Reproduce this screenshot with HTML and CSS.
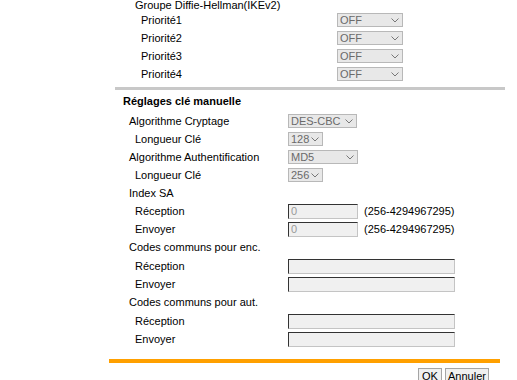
FILE: index.html
```html
<!DOCTYPE html>
<html lang="fr">
<head>
<meta charset="utf-8">
<title>Réglages IPsec</title>
<link rel="stylesheet" href="styles.css">
</head>
<body>
<div class="page">
  <section class="dh">
    <div class="dh-title">Groupe Diffie-Hellman(IKEv2)</div>
    <div class="row row-dh"><span class="lbl">Priorité1</span><span class="sel w66"><span>OFF</span><svg class="chev" width="8" height="5" viewBox="0 0 8 5"><polyline points="0.5,0.5 4,4 7.5,0.5"/></svg></span></div>
    <div class="row row-dh"><span class="lbl">Priorité2</span><span class="sel w66"><span>OFF</span><svg class="chev" width="8" height="5" viewBox="0 0 8 5"><polyline points="0.5,0.5 4,4 7.5,0.5"/></svg></span></div>
    <div class="row row-dh"><span class="lbl">Priorité3</span><span class="sel w66"><span>OFF</span><svg class="chev" width="8" height="5" viewBox="0 0 8 5"><polyline points="0.5,0.5 4,4 7.5,0.5"/></svg></span></div>
    <div class="row row-dh"><span class="lbl">Priorité4</span><span class="sel w66"><span>OFF</span><svg class="chev" width="8" height="5" viewBox="0 0 8 5"><polyline points="0.5,0.5 4,4 7.5,0.5"/></svg></span></div>
  </section>
  <div class="sep"></div>
  <section class="manual">
    <div class="heading">Réglages clé manuelle</div>
    <div class="row row-m"><span class="lbl l1">Algorithme Cryptage</span><span class="sel w69"><span>DES-CBC</span><svg class="chev" width="8" height="5" viewBox="0 0 8 5"><polyline points="0.5,0.5 4,4 7.5,0.5"/></svg></span></div>
    <div class="row row-m"><span class="lbl l2">Longueur Clé</span><span class="sel w35"><span>128</span><svg class="chev" width="8" height="5" viewBox="0 0 8 5"><polyline points="0.5,0.5 4,4 7.5,0.5"/></svg></span></div>
    <div class="row row-m"><span class="lbl l1">Algorithme Authentification</span><span class="sel w70"><span>MD5</span><svg class="chev" width="8" height="5" viewBox="0 0 8 5"><polyline points="0.5,0.5 4,4 7.5,0.5"/></svg></span></div>
    <div class="row row-m"><span class="lbl l2">Longueur Clé</span><span class="sel w35"><span>256</span><svg class="chev" width="8" height="5" viewBox="0 0 8 5"><polyline points="0.5,0.5 4,4 7.5,0.5"/></svg></span></div>
    <div class="row row-m"><span class="lbl l1">Index SA</span></div>
    <div class="row row-m"><span class="lbl l2">Réception</span><input class="field short" type="text" value="0" disabled><span class="range">(256-4294967295)</span></div>
    <div class="row row-m"><span class="lbl l2">Envoyer</span><input class="field short" type="text" value="0" disabled><span class="range">(256-4294967295)</span></div>
    <div class="row row-m tall"><span class="lbl l1">Codes communs pour enc.</span></div>
    <div class="row row-m"><span class="lbl l2">Réception</span><input class="field long" type="text" disabled></div>
    <div class="row row-m"><span class="lbl l2">Envoyer</span><input class="field long" type="text" disabled></div>
    <div class="row row-m tall"><span class="lbl l1">Codes communs pour aut.</span></div>
    <div class="row row-m"><span class="lbl l2">Réception</span><input class="field long" type="text" disabled></div>
    <div class="row row-m"><span class="lbl l2">Envoyer</span><input class="field long" type="text" disabled></div>
  </section>
  <div class="orange"></div>
  <div class="buttons"><button class="btn ok" type="button">OK</button><button class="btn cancel" type="button">Annuler</button></div>
</div>
</body>
</html>
```
FILE: styles.css
```css
html, body {
  margin: 0;
  padding: 0;
  background: #fff;
  overflow: hidden;
}
body {
  font-family: "Liberation Sans", Arial, sans-serif;
  font-size: 11px;
  color: #000;
}
.page {
  margin-left: 109px;
  width: 391px;
  margin-top: -1px;
}
.dh {
  padding-left: 26px;
}
.dh-title {
  height: 12px;
  line-height: 12px;
}
.row {
  display: grid;
  align-items: center;
  height: 18px;
  line-height: 18px;
}
.row.tall {
  height: 19px;
  line-height: 19px;
}
.row-dh {
  grid-template-columns: 196px auto;
  padding-left: 6px;
}
.row-m {
  grid-template-columns: 179px auto 1fr;
}
.lbl {
  white-space: nowrap;
}
.l1 { padding-left: 20px; }
.l2 { padding-left: 26px; }
.sep {
  height: 3px;
  background: #c8c8c8;
  margin: 4px -5px 0 6px;
}
.heading {
  font-weight: bold;
  padding: 2px 0 2px 14px;
  line-height: 18px;
}
.sel {
  box-sizing: border-box;
  height: 14px;
  display: inline-flex;
  align-items: center;
  justify-content: space-between;
  background: #e8e8e8;
  border: 1px solid #b8b8b8;
  color: #6a6a6a;
  padding: 0 3px 0 2px;
  line-height: 12px;
}
.w66 { width: 66px; }
.w69 { width: 69px; }
.w70 { width: 70px; }
.w35 { width: 35px; }
.chev {
  display: block;
  fill: none;
  stroke: #777;
  stroke-width: 1;
}
.field {
  box-sizing: border-box;
  height: 15px;
  margin: 0;
  padding: 0 2px;
  font-family: inherit;
  font-size: 11px;
  color: #999;
  background: #f0f0f0;
  border-top: 1px solid #333;
  border-left: 1px solid #333;
  border-right: 1px solid #c4c4c4;
  border-bottom: 1px solid #c4c4c4;
  outline: none;
}
.short { width: 70px; }
.long { width: 167px; }
.range {
  padding-left: 6px;
  white-space: nowrap;
}
.orange {
  height: 4px;
  background: #ffa000;
  margin-top: 11px;
}
.buttons {
  display: flex;
  justify-content: flex-end;
  gap: 3px;
  padding-right: 11px;
  margin-top: 5px;
}
.btn {
  box-sizing: border-box;
  height: 14px;
  line-height: 12px;
  padding: 0;
  font-family: inherit;
  font-size: 11px;
  color: #000;
  background: #f0f0f0;
  border: 1px solid #a5a5a5;
  border-bottom: 0;
  border-radius: 0;
}
.ok { width: 24px; }
.cancel { width: 44px; }
```
